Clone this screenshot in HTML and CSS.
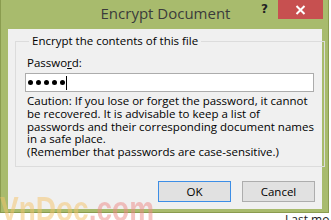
FILE: index.html
```html
<!DOCTYPE html>
<html>
<head>
<meta charset="utf-8">
<link rel="stylesheet" href="styles.css">
</head>
<body>
<div class="window">
  <div class="titlebar">
    <div></div>
    <div class="title">Encrypt Document</div>
    <div class="controls">
      <span class="help">?</span>
      <span class="close"><svg width="11" height="10" viewBox="0 0 11 10"><path d="M1.5 1 L9.5 9 M9.5 1 L1.5 9" stroke="#fff" stroke-width="2" fill="none"/></svg></span>
    </div>
  </div>
  <div class="client">
    <fieldset class="group">
      <legend>Encrypt the contents of this file</legend>
      <div class="label">Passwo<u>r</u>d:</div>
      <div class="input"><span class="dot"></span><span class="dot"></span><span class="dot"></span><span class="dot"></span><span class="dot"></span><span class="caret"></span></div>
      <p class="caution">Caution: If you lose or forget the password, it cannot<br>be recovered. It is advisable to keep a list of<br>passwords and their corresponding document names<br>in a safe place.<br>(Remember that passwords are case-sensitive.)</p>
    </fieldset>
    <div class="buttons">
      <button class="btn default">OK</button>
      <button class="btn">Cancel</button>
    </div>
  </div>
</div>
<div class="below"><span>Last mo</span></div>
<div class="watermark"><span class="wm1">VnDoc</span><span class="wm2">.com</span></div>
</body>
</html>
```

FILE: styles.css
```css
html, body {
  margin: 0;
  padding: 0;
}
body {
  width: 331px;
  height: 220px;
  overflow: hidden;
  background: #ffffff;
  position: relative;
  font-family: "Open Sans", "Noto Sans", sans-serif;
}
.window {
  width: 327px;
  height: 212px;
  background: #a8bb6d;
  border: 1px solid #8a9c4f;
  border-top: 0;
  display: flex;
  flex-direction: column;
}
.titlebar {
  height: 29px;
  flex: none;
  display: grid;
  grid-template-columns: 1fr auto 1fr;
  align-items: start;
}
.title {
  font-size: 15px;
  color: #3b3b3b;
  line-height: 20px;
  margin-top: 3px;
  padding-left: 2px;
}
.controls {
  display: flex;
  justify-content: flex-end;
  align-items: flex-start;
  padding-right: 5px;
}
.help {
  font-family: "DejaVu Sans", sans-serif;
  font-weight: bold;
  font-size: 12px;
  color: #222;
  line-height: 19px;
  margin-right: 10px;
}
.close {
  width: 45px;
  height: 19px;
  background: #c75050;
  display: flex;
  align-items: center;
  justify-content: center;
}
.client {
  margin-left: 7px;
  width: 314px;
  height: 180px;
  flex: none;
  background: #f0f0f0;
  box-sizing: border-box;
  padding: 5px 7px 0 7px;
}
.group {
  margin: 0;
  border: 1px solid #dcdcdc;
  padding: 8px 10px 0 9px;
  height: 133px;
  box-sizing: border-box;
}
.group legend {
  font-size: 11.5px;
  color: #000;
  padding: 0 3px;
  margin-left: 4px;
  line-height: 14px;
}
.label {
  font-size: 11.5px;
  color: #000;
  line-height: 14px;
  margin-left: 2px;
}
.label u {
  text-decoration-thickness: 1px;
}
.input {
  margin-top: 3px;
  height: 19px;
  box-sizing: border-box;
  border: 1px solid #acacac;
  background: #fff;
  display: flex;
  align-items: center;
  padding-left: 2px;
  gap: 3px;
}
.dot {
  width: 5px;
  height: 5px;
  border-radius: 50%;
  background: #000;
}
.caret {
  width: 1px;
  height: 14px;
  background: #000;
  margin-left: -2px;
}
.caution {
  margin: 3px 0 0 2px;
  font-size: 11.5px;
  line-height: 12.75px;
  color: #000;
  white-space: nowrap;
}
.buttons {
  display: flex;
  justify-content: flex-end;
  gap: 11px;
  margin-top: 14px;
}
.btn {
  width: 73px;
  height: 21px;
  box-sizing: border-box;
  border: 1px solid #adadad;
  background: #e1e1e1;
  font-family: "Open Sans", "Noto Sans", sans-serif;
  font-size: 11.5px;
  color: #000;
  padding: 0;
}
.btn.default {
  border-color: #3d8ee6;
}
.below {
  width: 46px;
  overflow: hidden;
  font-size: 12px;
  color: #222;
  margin-left: 285px;
  line-height: 12px;
  margin-top: 1px;
  white-space: nowrap;
}
.watermark {
  position: absolute;
  left: 0;
  top: 191px;
  font-family: "Liberation Sans", sans-serif;
  font-weight: bold;
  font-size: 35px;
  line-height: 35px;
  opacity: 0.5;
  white-space: nowrap;
  transform: scaleX(0.8);
  transform-origin: left top;
  filter: blur(0.7px);
}
.wm1 { color: #f5c36a; }
.wm2 { color: #ee8a86; }
```
